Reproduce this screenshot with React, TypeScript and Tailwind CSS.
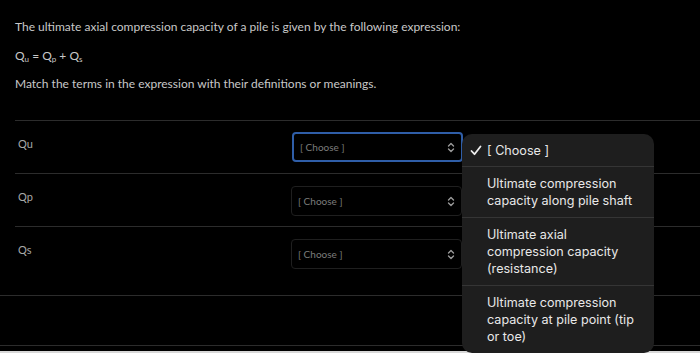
import React from "react";

function Chevrons() {
  return (
    <svg width="8" height="11" viewBox="0 0 8 11" fill="none" stroke="#9a9a9a" strokeWidth="1.4" strokeLinecap="round" strokeLinejoin="round">
      <path d="M1.5 4 L4 1.5 L6.5 4" />
      <path d="M1.5 7 L4 9.5 L6.5 7" />
    </svg>
  );
}

function Check() {
  return (
    <svg width="12" height="11" viewBox="0 0 12 11" fill="none" stroke="#ececec" strokeWidth="1.8" strokeLinecap="round" strokeLinejoin="round">
      <path d="M1.5 6 L4.5 9.2 L10.5 1.5" />
    </svg>
  );
}

function Select({ focused }: { focused?: boolean }) {
  return (
    <div
      className={
        "flex h-[30px] w-[171px] items-center justify-between rounded-[4px] pl-[6px] pr-[6px] " +
        (focused ? "border-2 border-[#2f5ea8]" : "border border-[#1f1f1f]")
      }
    >
      <span className="text-[10px] text-[#7c7c7c]">[ Choose ]</span>
      <Chevrons />
    </div>
  );
}

export default function App() {
  const rows = [
    { label: "Qu", focused: true },
    { label: "Qp" },
    { label: "Qs" },
  ];
  return (
    <div
      className="relative h-[353px] w-[700px] overflow-hidden bg-black text-[#c8c8c8]"
      style={{ fontFamily: "Lato, 'Open Sans', sans-serif" }}
    >
      <div className="pl-[15px] pt-[18px]">
        <p className="text-[12px] leading-[18px]">
          The ultimate axial compression capacity of a pile is given by the following expression:
        </p>
        <p className="mt-[11px] text-[12px] leading-[18px]">
          Q<sub className="text-[8px]">u</sub> = Q<sub className="text-[8px]">p</sub> + Q
          <sub className="text-[8px]">s</sub>
        </p>
        <p className="mt-[10px] text-[12px] leading-[18px]">
          Match the terms in the expression with their definitions or meanings.
        </p>
      </div>

      <div className="mt-[27px] pl-[15px]">
        <div className="border-t border-[#2c2c2c]">
          {rows.map((r, i) => (
            <div
              key={r.label}
              className={
                "flex items-start justify-between pr-[237px] " +
                (i < 2 ? "h-[53px] border-b border-[#2c2c2c]" : "h-[68px]")
              }
            >
              <span className="pl-[3px] pt-[15px] text-[11px] text-[#a8a8a8]">{r.label}</span>
              <div className={r.focused ? "pt-[11px]" : "pt-[12px] pr-[1px]"}>
                <Select focused={r.focused} />
              </div>
            </div>
          ))}
        </div>
      </div>
      <div className="h-[51px] border-y border-[#2c2c2c]" />
      <div className="mt-[5px] h-[3px] bg-[#d8d8d8]" />

      <div
        className="absolute left-[462px] top-[134px] w-[192px] overflow-hidden rounded-[10px] bg-[#1e1e1e] text-[12.6px] leading-[17px] text-[#e8e8e8]"
        style={{ fontFamily: "Inter, 'Liberation Sans', sans-serif" }}
      >
        <div className="flex h-[33px] items-center border-b border-[#353535] pl-[8px]">
          <span className="w-[17px]"><Check /></span>
          <span>[ Choose ]</span>
        </div>
        <div className="border-b border-[#353535] py-[8px] pl-[25px] pr-[8px]">
          Ultimate compression capacity along pile shaft
        </div>
        <div className="border-b border-[#353535] py-[8px] pl-[25px] pr-[8px]">
          Ultimate axial compression capacity (resistance)
        </div>
        <div className="py-[8px] pl-[25px] pr-[8px]">
          Ultimate compression capacity at pile point (tip or toe)
        </div>
      </div>
    </div>
  );
}
